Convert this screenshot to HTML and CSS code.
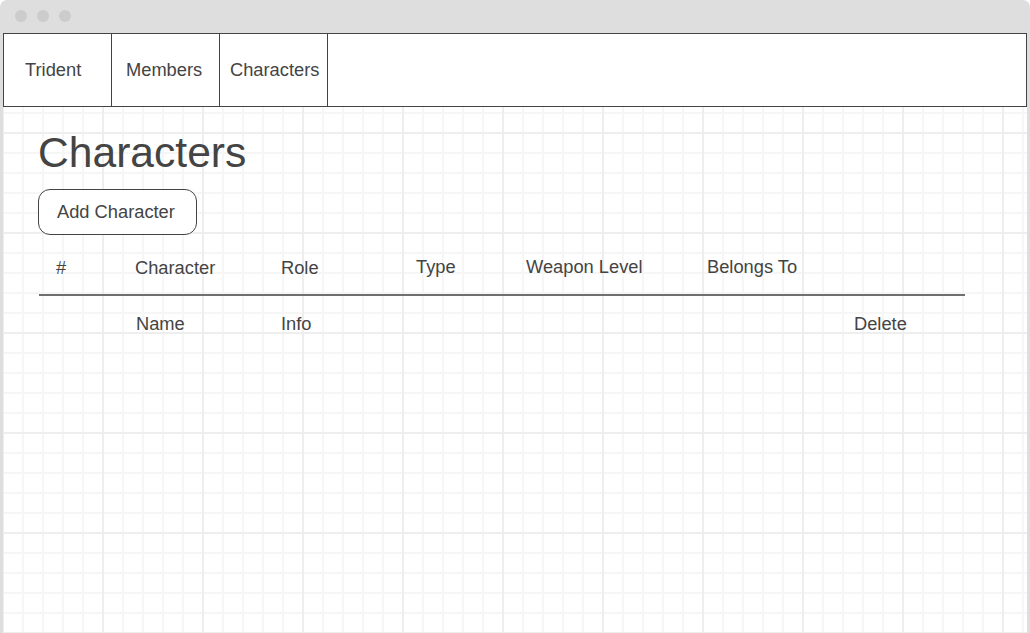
FILE: index.html
```html
<!DOCTYPE html>
<html lang="en">
<head>
<meta charset="utf-8">
<title>Characters</title>
<link rel="stylesheet" href="styles.css">
</head>
<body>
<div class="window">
  <div class="titlebar">
    <span class="dot"></span><span class="dot"></span><span class="dot"></span>
  </div>
  <div class="page">
    <nav class="nav">
      <a class="nav-item nav-brand">Trident</a>
      <a class="nav-item nav-members">Members</a>
      <a class="nav-item nav-chars">Characters</a>
    </nav>
    <main class="content">
      <h1 class="title">Characters</h1>
      <button class="btn">Add Character</button>
      <table class="table">
        <colgroup>
          <col class="c1"><col class="c2"><col class="c3"><col class="c4"><col class="c5"><col class="c6"><col class="c7">
        </colgroup>
        <thead>
          <tr>
            <th class="first">#</th>
            <th>Character</th>
            <th>Role</th>
            <th class="up">Type</th>
            <th class="up">Weapon Level</th>
            <th class="up">Belongs To</th>
            <th></th>
          </tr>
        </thead>
        <tbody>
          <tr>
            <td class="first"></td>
            <td class="name">Name</td>
            <td>Info</td>
            <td></td>
            <td></td>
            <td></td>
            <td class="del">Delete</td>
          </tr>
        </tbody>
      </table>
    </main>
  </div>
</div>
</body>
</html>
```
FILE: styles.css
```css
html, body {
  margin: 0;
  padding: 0;
  background: #ffffff;
}

body {
  font-family: "Liberation Sans", Arial, sans-serif;
  color: #444444;
}

.window {
  width: 1030px;
  height: 633px;
  background: #dedede;
  border-radius: 7px 7px 0 0;
  padding: 0 3px;
  box-sizing: border-box;
  display: flex;
  flex-direction: column;
  overflow: hidden;
}

.titlebar {
  height: 33px;
  display: flex;
  align-items: center;
  gap: 10px;
  padding-left: 12px;
  flex: none;
}

.dot {
  width: 12px;
  height: 12px;
  border-radius: 50%;
  background: #cccccc;
  margin-top: -1px;
}

.page {
  flex: 1;
  background-color: #ffffff;
  background-image:
    linear-gradient(to right, #eeeeee 0, #eeeeee 2px, transparent 2px),
    linear-gradient(to bottom, #eeeeee 0, #eeeeee 2px, transparent 2px),
    linear-gradient(to right, #f6f6f6 0, #f6f6f6 2px, transparent 2px),
    linear-gradient(to bottom, #f6f6f6 0, #f6f6f6 2px, transparent 2px);
  background-size: 100px 100px, 100px 100px, 20px 20px, 20px 20px;
  background-position: 99px 0, 0 99px, 19px 0, 0 19px;
  display: flex;
  flex-direction: column;
}

.nav {
  height: 74px;
  box-sizing: border-box;
  border: 1px solid #444444;
  background: #ffffff;
  display: flex;
  flex: none;
}

.nav-item {
  width: 108px;
  box-sizing: border-box;
  border-right: 1px solid #444444;
  display: flex;
  align-items: center;
  font-size: 18.3px;
  color: #444444;
  text-decoration: none;
}

.nav-brand { padding-left: 21px; }
.nav-members { padding-left: 14px; }
.nav-chars { padding-left: 10px; }

.content {
  padding: 21px 0 0 35px;
}

.title {
  margin: 0;
  font-size: 42.6px;
  line-height: 48px;
  font-weight: normal;
  color: #444444;
}

.btn {
  margin-top: 13px;
  height: 46px;
  padding: 0 21px 0 18px;
  border: 1px solid #444444;
  border-radius: 12px;
  background: #ffffff;
  font-family: "Liberation Sans", Arial, sans-serif;
  font-size: 18.3px;
  color: #444444;
  display: block;
}

.table {
  margin-left: 1px;
  width: 926px;
  border-collapse: collapse;
  table-layout: fixed;
}

.c1 { width: 96px; }
.c2 { width: 146px; }
.c3 { width: 135px; }
.c4 { width: 110px; }
.c5 { width: 181px; }
.c6 { width: 147px; }
.c7 { width: 111px; }

.table th,
.table td {
  padding: 0;
  text-align: left;
  font-weight: normal;
  font-size: 18.3px;
  line-height: 21px;
  color: #444444;
}

.table thead tr {
  border-bottom: 2px solid #6f6f6f;
}

.table th {
  padding-top: 22px;
  padding-bottom: 16px;
}

.table th.up {
  position: relative;
  top: -1px;
}

.table th.first {
  padding-left: 17px;
}

.table td {
  padding-top: 17px;
}

.table td.name {
  padding-left: 1px;
}
```
